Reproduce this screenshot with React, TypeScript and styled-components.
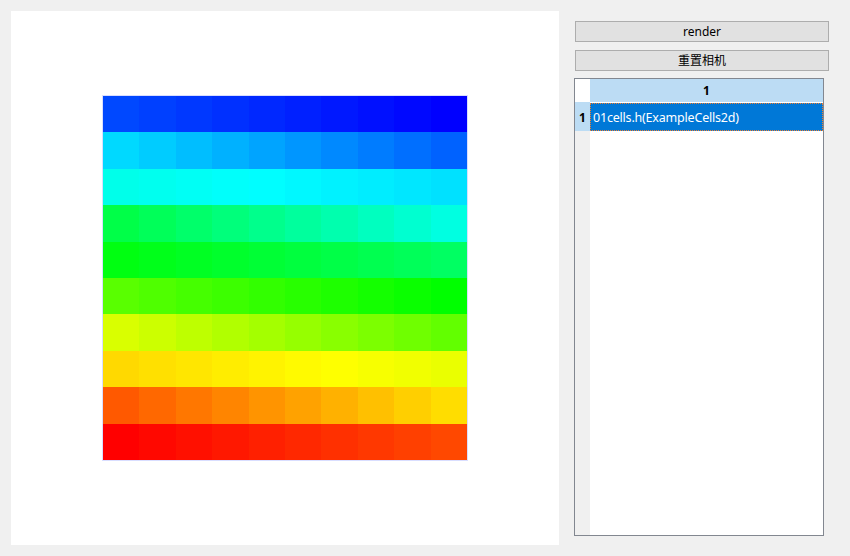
import * as React from "react";
import styled, { createGlobalStyle } from "styled-components";

// hue range (left -> right) for every band of the colour map, top to bottom
const bands: [number, number][] = [
  [223, 240],
  [189, 217],
  [175, 187],
  [137, 173],
  [124, 143],
  [99, 120],
  [69, 97],
  [51, 65],
  [21, 52],
  [0, 17],
];

const COLS = 10;

const GlobalStyle = createGlobalStyle`
  html, body {
    margin: 0;
    padding: 0;
    background: #f0f0f0;
  }
  body {
    font-family: "Noto Sans", "Noto Sans CJK SC", sans-serif;
    font-size: 12px;
    color: #000;
  }
`;

const Window = styled.div`
  display: flex;
  align-items: flex-start;
  gap: 15px;
  padding: 11px;
  width: 850px;
  height: 556px;
  box-sizing: border-box;
`;

const Viewport = styled.div`
  width: 548px;
  height: 534px;
  background: #ffffff;
  display: flex;
  align-items: center;
  justify-content: center;
  flex-shrink: 0;
`;

const CellGrid = styled.div`
  width: 364px;
  height: 364px;
  display: grid;
  grid-template-columns: repeat(${COLS}, 1fr);
  grid-template-rows: repeat(${bands.length}, 1fr);
  box-shadow: 0 0 0 1px rgba(180, 190, 255, 0.5);
`;

const Cell = styled.div``;

const SidePanel = styled.div`
  display: flex;
  flex-direction: column;
  width: 255px;
  padding-top: 10px;
`;

const ActionButton = styled.button`
  box-sizing: border-box;
  margin: 0 0 8px 1px;
  width: 254px;
  height: 21px;
  padding: 0;
  border: 1px solid #adadad;
  background: #e1e1e1;
  font-family: "Noto Sans", "Noto Sans CJK SC", sans-serif;
  font-size: 12px;
  line-height: 19px;
  color: #000;
  text-align: center;
`;

const Table = styled.div`
  margin-top: -1px;
  width: 250px;
  height: 458px;
  box-sizing: border-box;
  border: 1px solid #828790;
  display: grid;
  grid-template-columns: 15px 1fr;
  grid-template-rows: 23px 29px 1fr;
  background: #ffffff;
`;

const Corner = styled.div`
  background: #ffffff;
`;

const ColumnHeader = styled.div`
  background: #bcdcf4;
  display: flex;
  align-items: center;
  justify-content: center;
  font-weight: bold;
  font-size: 12px;
`;

const RowHeader = styled.div<{ $filler?: boolean }>`
  background: ${(p) => (p.$filler ? "#f0f0f0" : "#bcdcf4")};
  display: flex;
  align-items: center;
  justify-content: center;
  font-weight: bold;
  font-size: 12px;
  padding-top: 2px;
  box-sizing: border-box;
`;

const SelectedCell = styled.div`
  margin: 1px 0 0 0;
  background: #0078d7;
  color: #ffffff;
  border: 1px dotted #f08030;
  display: flex;
  align-items: center;
  padding-left: 2px;
  font-size: 12.5px;
  letter-spacing: -0.2px;
`;

const Blank = styled.div`
  background: #ffffff;
`;

function cellColor(row: number, col: number) {
  const [a, b] = bands[row];
  const h = a + ((b - a) * col) / (COLS - 1);
  return `hsl(${h.toFixed(1)}, 100%, 50%)`;
}

export default function App() {
  return (
    <>
      <GlobalStyle />
      <Window>
        <Viewport>
          <CellGrid>
            {bands.map((_, r) =>
              Array.from({ length: COLS }).map((__, c) => (
                <Cell key={`${r}-${c}`} style={{ background: cellColor(r, c) }} />
              ))
            )}
          </CellGrid>
        </Viewport>
        <SidePanel>
          <ActionButton>render</ActionButton>
          <ActionButton>重置相机</ActionButton>
          <Table>
            <Corner />
            <ColumnHeader>1</ColumnHeader>
            <RowHeader>1</RowHeader>
            <SelectedCell>01cells.h(ExampleCells2d)</SelectedCell>
            <RowHeader $filler />
            <Blank />
          </Table>
        </SidePanel>
      </Window>
    </>
  );
}
